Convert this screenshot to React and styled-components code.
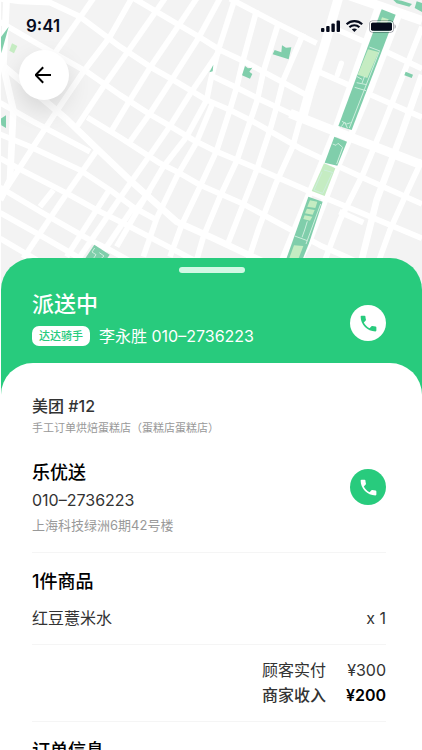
import React from "react";
import styled, { createGlobalStyle } from "styled-components";

const streets = [
  "M400 -6 L600 112 L660 150 L740 188 L790 215 L920 286",
  "M630 225 L710 263 L780 298 L880 345",
  "M0 -4 L60 4 L150 8 L240 50 L360 140 L450 200 L520 240 L620 300 L690 330 L760 365 L900 445 L1000 492 L1100 538 L1266 612",
  "M0 66 L110 130 L260 215 L360 285 L450 343 L510 378 L580 420 L650 455 L710 480 L770 505 L930 575 L1080 637 L1266 715",
  "M262 352 L360 412 L480 490 L540 520 L600 555 L730 612 L870 688 L960 736 L1060 780 L1266 865",
  "M0 308 L100 365 L270 455",
  "M0 403 L90 440 L240 510 L330 570 L400 622 L470 660",
  "M0 475 L60 508 L200 580 L290 630 L370 670 L450 712 L600 790",
  "M0 562 L130 640 L200 680 L270 720 L330 750 L420 800",
  "M0 638 L110 700 L180 740 L240 775",
  "M0 715 L110 780 L180 830",
  "M690 -4 L830 70 L950 130",
  "M1000 84 L1105 130 L1266 206",
  "M955 215 L1030 248 L1120 288 L1266 352",
  "M1018 635 L1090 668",
  "M280 -5 L235 60 L130 208",
  "M395 -5 L330 110 L250 215 L160 348 L100 440 L10 580",
  "M495 -5 L440 74 L380 160 L310 260 L232 378",
  "M590 -5 L520 100 L450 203 L390 300 L336 390",
  "M660 -5 L595 115 L515 240 L450 340 L390 425",
  "M660 150 L570 282 L510 378 L450 465 L390 550 L230 785",
  "M290 452 L180 610 L70 775",
  "M160 570 L120 620",
  "M330 566 L200 770",
  "M400 622 L300 770",
  "M450 570 L400 640",
  "M705 -5 L655 150 L632 240 L620 300 L560 410 L490 500 L425 610 L350 740",
  "M640 305 L588 430 L530 530 L470 655 L430 770",
  "M770 30 L728 185 L710 262 L688 335 L650 452 L600 560 L545 675 L510 770",
  "M835 70 L790 215 L772 300 L750 365 L710 483 L660 590 L610 710 L590 780",
  "M910 100 L850 240 L830 320 L810 390 L770 510 L730 612 L680 740",
  "M900 360 L878 440 L828 550 L778 680 L745 780",
  "M1266 80 L1215 210 L1150 375 L1090 520 L1020 660 L975 780",
  "M1266 480 L1215 590 L1170 690 L1130 800",
];

const avenues = [
  "M20 -5 L10 200 L40 330 L30 540 L0 600",
  "M0 190 L150 315 L200 358 L290 445 L400 550 L530 665 L640 715 L800 790",
  "M1135 20 L1000 405 L845 785",
  "M1202 30 L1110 270 L1015 495 L925 730 L895 785",
  "M1266 225 L1205 400 L1130 600 L1085 780",
];

const boulevards = [
  "M1015 -5 L970 150 L930 270 L908 350",
  "M870 340 L1000 392 L1266 495",
  "M1040 -16 L1266 62",
];

const parks = [
  "M1145 28 L1187 44 L1055 390 L1015 378 Z",
  "M1003 410 L1041 425 L1012 497 L974 488 Z",
  "M925 590 L968 605 L927 730 L905 785 L856 785 Z",
  "M846 136 L858 143 L874 142 L866 178 L818 163 L824 150 L844 157 Z",
  "M735 198 L744 205 L757 203 L748 215 L757 222 L750 236 L726 226 Z",
  "M640 194 L638 214 L628 217 Z",
  "M1217 215 L1239 224 L1235 234 L1213 226 Z",
  "M1178 -2 L1205 2 L1236 12 L1228 20 L1190 10 Z",
  "M1250 4 L1270 10 L1266 36 L1244 24 Z",
  "M26 80 L4 160 L2 112 Z",
  "M2 356 L18 346 L18 384 L4 376 Z",
  "M283 734 L329 764 L310 792 L246 790 Z",
];

const lawns = [
  "M1104 148 L1136 156 L1102 234 L1073 224 Z",
  "M1146 52 L1166 58 L1158 76 L1140 70 Z",
  "M972 490 L1006 505 L974 588 L935 573 Z",
  "M930 601 L952 605 L946 624 L922 620 Z",
  "M921 626 L944 630 L938 644 L915 640 Z",
  "M914 646 L937 650 L930 662 L910 657 Z",
  "M882 736 L910 738 L892 785 L864 785 Z",
  "M36 130 L52 138 L42 160 L28 152 Z",
];

const parkPaths = [
  "M1138 154 L1048 384",
  "M1108 141 L1140 153",
  "M1064 262 L1098 272",
  "M1068 228 L1086 238 M1094 228 L1086 250 M1070 248 L1100 254",
  "M1026 364 L1040 372 L1052 368 M1024 380 L1034 366 L1042 384",
  "M998 432 L1008 436 L1014 430 L1028 442 L1010 492",
  "M972 510 L1000 518 M966 516 L942 570 L968 580 L996 520",
  "M962 612 L918 732 M922 664 L914 690 L906 712 M884 708 L922 722",
  "M284 744 L276 756 L288 764 L280 776 M298 758 L312 768 L296 782",
];

const CityMap = () => (
  <MapArt viewBox="3 0 1263 900" preserveAspectRatio="xMidYMin slice" aria-hidden="true">
    <rect width="1266" height="900" fill="#f3f3f3" />
    <g fill="none" stroke="#fff" strokeLinejoin="round">
      <g strokeWidth="17">
        {streets.map((d) => (
          <path key={d} d={d} />
        ))}
      </g>
      <g strokeWidth="20">
        {avenues.map((d) => (
          <path key={d} d={d} />
        ))}
      </g>
      <g strokeWidth="28">
        {boulevards.map((d) => (
          <path key={d} d={d} />
        ))}
      </g>
      <path d="M1024 190 L1012 225" strokeWidth="16" strokeLinecap="round" />
    </g>
    {parks.map((d) => (
      <path key={d} d={d} fill="#80ceab" />
    ))}
    {lawns.map((d) => (
      <path key={d} d={d} fill="#c5ecc2" />
    ))}
    <g fill="none" stroke="#cdeedd" strokeWidth="3">
      {parkPaths.map((d) => (
        <path key={d} d={d} />
      ))}
    </g>
  </MapArt>
);

const StatusIcons = () => (
  <svg width="75" height="14" viewBox="0 0 75 14" aria-hidden="true">
    <g fill="#060b1c">
      <rect x="0" y="9" width="3.4" height="4" rx="1" />
      <rect x="5.2" y="7" width="3.4" height="6" rx="1" />
      <rect x="10.4" y="4.4" width="3.4" height="8.6" rx="1" />
      <rect x="15.6" y="1.6" width="3.4" height="11.4" rx="1" />
      <rect x="50" y="3.4" width="21" height="8.4" rx="1.6" />
      <path d="M73.6 5.2 C75 5.8 75 9.2 73.6 9.8 Z" opacity="0.45" />
      <path d="M33.4 13 L30.8 10.3 C32.2 9.1 34.6 9.1 36 10.3 Z" />
    </g>
    <g fill="none" stroke="#060b1c" strokeWidth="2.1">
      <path d="M25.6 5.3 C30 1.1 36.8 1.1 41.2 5.3" />
      <path d="M28.4 8.3 C31.2 5.6 35.6 5.6 38.4 8.3" />
    </g>
    <rect x="48.5" y="1.9" width="24" height="11.4" rx="3" fill="none" stroke="#060b1c" strokeOpacity="0.4" />
    <rect x="49.3" y="2.7" width="22.4" height="9.8" rx="2.2" fill="none" stroke="#fff" strokeWidth="0.8" />
  </svg>
);

const PhoneIcon = () => (
  <svg width="21" height="21" viewBox="0 0 24 24" fill="currentColor" aria-hidden="true">
    <path d="M6.62 10.79c1.44 2.83 3.76 5.14 6.59 6.59l2.2-2.2c.27-.27.67-.36 1.02-.24 1.12.37 2.33.57 3.57.57.55 0 1 .45 1 1V20c0 .55-.45 1-1 1-9.39 0-17-7.61-17-17 0-.55.45-1 1-1h3.5c.55 0 1 .45 1 1 0 1.25.2 2.45.57 3.57.11.35.03.74-.25 1.02l-2.2 2.2z" />
  </svg>
);

const App = () => {
  return (
    <Page>
      <GlobalStyle />
      <MapArea>
        <CityMap />
        <MapOverlay>
          <StatusBar>
            <time>9:41</time>
            <StatusIcons />
          </StatusBar>
          <BackButton type="button" aria-label="返回">
            <svg width="18" height="18" viewBox="1 0 18 18" fill="none" stroke="#000" strokeWidth="2">
              <path d="M17 9 H2" />
              <path d="M9.2 1.2 L1.6 9 L9.2 16.8" />
            </svg>
          </BackButton>
        </MapOverlay>
      </MapArea>
      <Sheet>
        <Handle />
        <RiderHeader>
          <div>
            <Status>派送中</Status>
            <RiderRow>
              <Badge>达达骑手</Badge>
              <span>李永胜 010–2736223</span>
            </RiderRow>
          </div>
          <CallButton type="button" aria-label="联系骑手" $inverted>
            <PhoneIcon />
          </CallButton>
        </RiderHeader>
        <Details>
          <Source>美团 #12</Source>
          <Shop>手工订单烘焙蛋糕店（蛋糕店蛋糕店）</Shop>
          <Customer>
            <div>
              <Title>乐优送</Title>
              <Phone>010–2736223</Phone>
              <Address>上海科技绿洲6期42号楼</Address>
            </div>
            <CallButton type="button" aria-label="联系顾客">
              <PhoneIcon />
            </CallButton>
          </Customer>
          <Section>
            <Title>1件商品</Title>
            <Item>
              <span>红豆薏米水</span>
              <span>x 1</span>
            </Item>
          </Section>
          <Totals>
            <dt>顾客实付</dt>
            <Amount>¥300</Amount>
            <Income>商家收入</Income>
            <Amount $strong>¥200</Amount>
          </Totals>
          <Section>
            <Title>订单信息</Title>
          </Section>
        </Details>
      </Sheet>
    </Page>
  );
};

const GlobalStyle = createGlobalStyle`
  * {
    box-sizing: border-box;
  }
  body {
    margin: 0;
    background-color: white;
    font-family: Inter, "Noto Sans CJK SC", sans-serif;
  }
  h1, h2, p, dl, dt, dd {
    margin: 0;
    font-weight: 400;
  }
`;
const Page = styled.main`
  height: 100vh;
  padding-left: 1px;
  display: flex;
  flex-direction: column;
  overflow-y: auto;
  scrollbar-width: none;
`;
const MapArea = styled.div`
  display: grid;
  flex-shrink: 0;
  height: 300px;

  > * {
    grid-area: 1 / 1;
  }
`;
const MapArt = styled.svg`
  width: 100%;
  height: 300px;
`;
const MapOverlay = styled.div`
  z-index: 1;
`;
const StatusBar = styled.div`
  display: flex;
  align-items: center;
  justify-content: space-between;
  padding: 14px 26px 0 25px;
  line-height: 24px;
  font-size: 17px;
  font-weight: 600;
  color: #060b1c;
`;
const BackButton = styled.button`
  display: flex;
  align-items: center;
  justify-content: center;
  width: 50px;
  height: 50px;
  margin: 12px 0 0 18px;
  padding: 0;
  border: 0;
  border-radius: 50%;
  background-color: white;
  box-shadow: 0 10px 24px rgba(0, 0, 0, 0.12);
`;
const Sheet = styled.section`
  flex: 1 0 auto;
  z-index: 2;
  margin-top: -42px;
  padding-top: 9px;
  border-radius: 32px 32px 0 0;
  background-color: #28cb7d;
`;
const Handle = styled.div`
  width: 66px;
  height: 6px;
  margin: 0 auto;
  border-radius: 3px;
  background-color: #d2f8e4;
`;
const RiderHeader = styled.header`
  display: flex;
  align-items: flex-start;
  justify-content: space-between;
  padding: 15px 36px 15px 31px;
  color: white;
`;
const Status = styled.h1`
  font-size: 22px;
  font-weight: 500;
  line-height: 32px;
`;
const RiderRow = styled.div`
  display: flex;
  align-items: center;
  gap: 9px;
  margin-top: 4px;
  font-size: 16px;
  line-height: 24px;
`;
const Badge = styled.span`
  padding: 0 7px;
  border-radius: 7px;
  background-color: white;
  color: #28cb7d;
  font-size: 11px;
  font-weight: 500;
  line-height: 20px;
`;
const CallButton = styled.button`
  display: flex;
  align-items: center;
  justify-content: center;
  width: 36px;
  height: 36px;
  margin-top: ${({ $inverted }) => ($inverted ? "17px" : "8px")};
  padding: 0;
  border: 0;
  border-radius: 50%;
  color: ${({ $inverted }) => ($inverted ? "#28cb7d" : "white")};
  background-color: ${({ $inverted }) => ($inverted ? "white" : "#28cb7d")};
`;
const Details = styled.div`
  padding: 32px 36px 24px 31px;
  border-radius: 32px 32px 0 0;
  background-color: white;
  color: #333;
`;
const Source = styled.p`
  font-size: 16px;
  font-weight: 500;
  line-height: 22px;
`;
const Shop = styled.p`
  font-size: 11px;
  line-height: 22px;
  color: #999;
`;
const Customer = styled.div`
  display: flex;
  justify-content: space-between;
  margin-top: 22px;
  padding-bottom: 17px;
`;
const Title = styled.h2`
  font-size: 18px;
  font-weight: 500;
  line-height: 24px;
  color: black;
`;
const Phone = styled.p`
  font-size: 16px;
  line-height: 30px;
`;
const Address = styled.p`
  font-size: 13px;
  line-height: 20px;
  color: #999;
`;
const Section = styled.section`
  padding: 17px 0 14px;
  border-top: 1px solid #f5f5f5;
`;
const Item = styled.div`
  display: flex;
  justify-content: space-between;
  margin-top: 12px;
  font-size: 16px;
  line-height: 24px;
`;
const Totals = styled.dl`
  display: grid;
  grid-template-columns: auto auto;
  justify-content: end;
  column-gap: 20px;
  padding: 13px 0;
  border-top: 1px solid #f5f5f5;
  font-size: 16px;
  line-height: 25px;
`;
const Income = styled.dt`
  && {
    font-weight: 500;
  }
`;
const Amount = styled.dd`
  && {
    font-weight: ${({ $strong }) => ($strong ? 600 : 400)};
  }
  color: ${({ $strong }) => ($strong ? "black" : "#333")};
  text-align: right;
`;
export default App;
